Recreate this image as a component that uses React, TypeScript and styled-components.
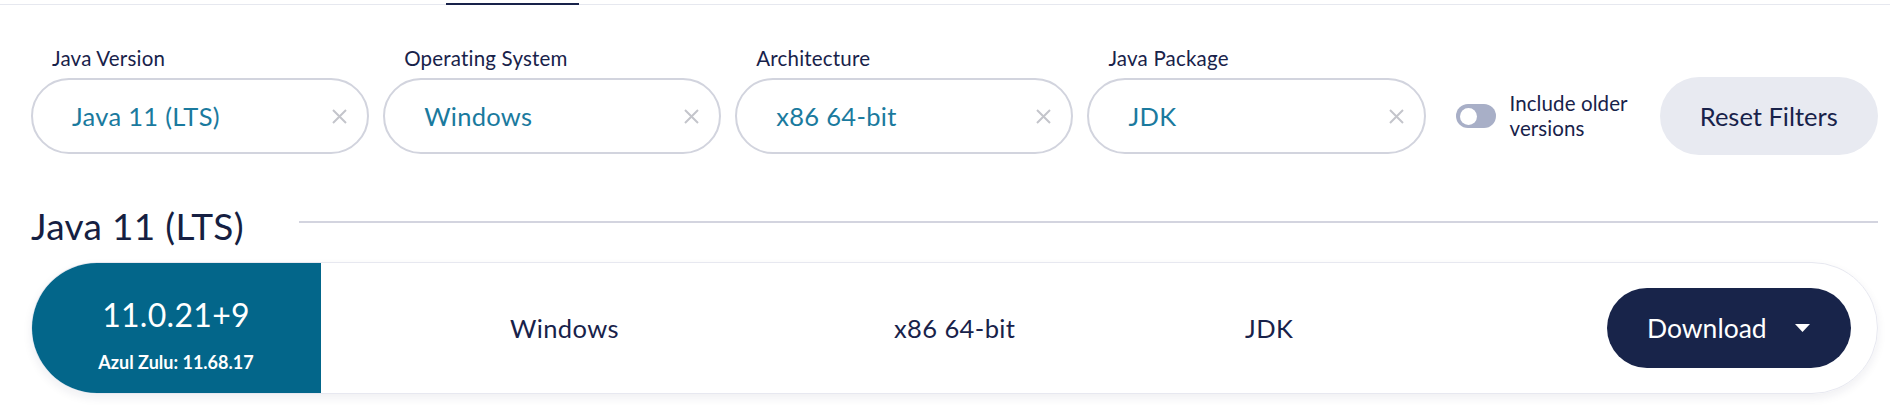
import * as React from "react";
import styled, { createGlobalStyle } from "styled-components";

const GlobalStyle = createGlobalStyle`
  html, body {
    margin: 0;
    padding: 0;
    background: #ffffff;
  }
  body {
    font-family: Lato, "Open Sans", sans-serif;
    color: #18224a;
  }
`;

const Page = styled.div`
  width: 1890px;
  height: 406px;
  overflow: hidden;
`;

const TabBar = styled.div`
  height: 4px;
  border-bottom: 1px solid #e6e8ef;
  display: flex;
  align-items: flex-end;
`;

const TabUnderline = styled.div<{ $offset: number; $width: number }>`
  margin-left: ${(p) => p.$offset}px;
  width: ${(p) => p.$width}px;
  height: 2px;
  margin-bottom: -1px;
  background: #18224a;
`;

const Content = styled.div`
  padding: 41px 12px 0 31px;
`;

const FilterRow = styled.div`
  display: flex;
  align-items: flex-end;
`;

const Field = styled.div`
  width: 339px;
  margin-right: 14px;
  display: flex;
  flex-direction: column;
`;

const FieldLabel = styled.label`
  padding-left: 21px;
  margin-bottom: 8px;
  font-size: 20.5px;
  letter-spacing: 0.2px;
  line-height: 24px;
  color: #18224a;
`;

const SelectBox = styled.div`
  height: 76px;
  box-sizing: border-box;
  border: 2px solid #d2d4de;
  border-radius: 38px;
  padding: 0 20px 0 39px;
  display: flex;
  align-items: center;
  justify-content: space-between;
`;

const SelectValue = styled.span`
  font-size: 25.5px;
  letter-spacing: 0.3px;
  color: #1a7a9e;
`;

const ClearIcon = styled.svg`
  width: 15px;
  height: 15px;
  flex-shrink: 0;
`;

const ToggleGroup = styled.div`
  height: 76px;
  margin-left: 16px;
  display: flex;
  align-items: center;
  gap: 14px;
`;

const Track = styled.div`
  width: 40px;
  height: 24px;
  box-sizing: border-box;
  padding: 0 4px;
  border-radius: 12px;
  background: #a8afc7;
  display: flex;
  align-items: center;
`;

const Knob = styled.div`
  width: 17px;
  height: 17px;
  border-radius: 50%;
  background: #ffffff;
`;

const ToggleText = styled.span`
  font-size: 20.5px;
  letter-spacing: 0.1px;
  line-height: 25px;
  width: 130px;
  color: #18224a;
`;

const ResetButton = styled.button`
  margin-left: 20px;
  margin-bottom: -1px;
  width: 219px;
  height: 78px;
  border: none;
  border-radius: 39px;
  background: #e8eaf1;
  font-family: inherit;
  font-size: 25.5px;
  color: #18224a;
`;

const HeadingRow = styled.div`
  margin-top: 51px;
  display: flex;
  align-items: center;
  gap: 55px;
`;

const Heading = styled.h2`
  margin: 0;
  font-size: 37px;
  letter-spacing: 0.3px;
  line-height: 42px;
  font-weight: 400;
  color: #161f42;
`;

const Divider = styled.div`
  flex: 1;
  height: 2px;
  margin-top: -8px;
  background: #d3d4df;
`;

const ReleaseCard = styled.div`
  margin-top: 15px;
  height: 132px;
  box-sizing: border-box;
  border: 1px solid #e7e8f0;
  border-radius: 66px;
  box-shadow: 0 4px 10px rgba(24, 34, 74, 0.07);
  display: flex;
  align-items: center;
  overflow: hidden;
`;

const VersionBlock = styled.div`
  width: 290px;
  align-self: stretch;
  margin: -1px 0 -1px -1px;
  padding-top: 13px;
  box-sizing: border-box;
  background: #03668a;
  border-radius: 66px 0 0 66px;
  color: #ffffff;
  display: flex;
  flex-direction: column;
  align-items: center;
  justify-content: center;
  gap: 18px;
`;

const VersionNumber = styled.div`
  font-size: 32px;
  letter-spacing: 0.3px;
  line-height: 36px;
`;

const ZuluVersion = styled.div`
  font-size: 18px;
  font-weight: 700;
  line-height: 22px;
`;

const InfoCols = styled.div`
  flex: 1;
  padding-left: 189px;
  display: grid;
  grid-template-columns: 384px 351px 1fr;
  align-items: center;
`;

const InfoCell = styled.span`
  font-size: 25.5px;
  letter-spacing: 0.4px;
  color: #18224a;
`;

const DownloadButton = styled.button`
  margin-right: 26px;
  width: 244px;
  height: 80px;
  border: none;
  border-radius: 40px;
  background: #18244a;
  color: #ffffff;
  font-family: inherit;
  font-size: 26.5px;
  display: flex;
  align-items: center;
  justify-content: space-between;
  padding: 0 41px 0 40px;
  box-sizing: border-box;
`;

const Caret = styled.svg`
  width: 15px;
  height: 8px;
`;

const filters = [
  { label: "Java Version", value: "Java 11 (LTS)" },
  { label: "Operating System", value: "Windows" },
  { label: "Architecture", value: "x86 64-bit" },
  { label: "Java Package", value: "JDK" },
];

export default function App() {
  return (
    <Page>
      <GlobalStyle />
      <TabBar>
        <TabUnderline $offset={446} $width={133} />
      </TabBar>
      <Content>
        <FilterRow>
          {filters.map((f) => (
            <Field key={f.label}>
              <FieldLabel>{f.label}</FieldLabel>
              <SelectBox>
                <SelectValue>{f.value}</SelectValue>
                <ClearIcon viewBox="0 0 15 15">
                  <path d="M1 1 L14 14 M14 1 L1 14" stroke="#c4c5cb" strokeWidth="2" fill="none" />
                </ClearIcon>
              </SelectBox>
            </Field>
          ))}
          <ToggleGroup>
            <Track>
              <Knob />
            </Track>
            <ToggleText>Include older versions</ToggleText>
          </ToggleGroup>
          <ResetButton>Reset Filters</ResetButton>
        </FilterRow>

        <HeadingRow>
          <Heading>Java 11 (LTS)</Heading>
          <Divider />
        </HeadingRow>

        <ReleaseCard>
          <VersionBlock>
            <VersionNumber>11.0.21+9</VersionNumber>
            <ZuluVersion>Azul Zulu: 11.68.17</ZuluVersion>
          </VersionBlock>
          <InfoCols>
            <InfoCell>Windows</InfoCell>
            <InfoCell>x86 64-bit</InfoCell>
            <InfoCell>JDK</InfoCell>
          </InfoCols>
          <DownloadButton>
            Download
            <Caret viewBox="0 0 15 8">
              <path d="M0 0 L15 0 L7.5 8 Z" fill="#ffffff" />
            </Caret>
          </DownloadButton>
        </ReleaseCard>
      </Content>
    </Page>
  );
}
